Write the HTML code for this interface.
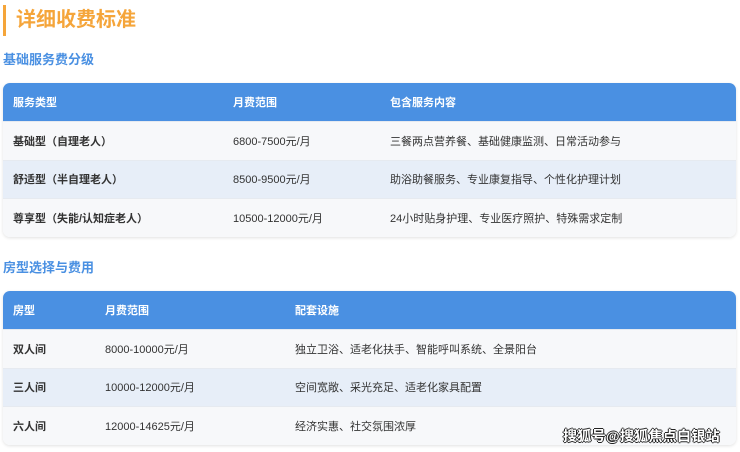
<!DOCTYPE html>
<html><head><meta charset="utf-8"><style>
*{margin:0;padding:0;box-sizing:border-box}
body{width:740px;height:452px;background:#fff;position:relative;overflow:hidden;font-family:"Liberation Sans","Noto Sans CJK SC",sans-serif;color:#333}
.bar{position:absolute;left:3px;top:5px;width:3px;height:31px;background:#f5a53a}
.title{position:absolute;left:16px;top:6px;font-size:20px;font-weight:bold;color:#f5a53a;line-height:28px}
.sub{position:absolute;left:3px;font-size:13px;font-weight:bold;color:#4a90e2;line-height:18px}
.tbl{position:absolute;left:3px;width:733px;border-radius:7px;overflow:hidden;box-shadow:0 1px 3px rgba(0,0,0,.12)}
.row{height:38.5px;display:flex;align-items:center;font-size:11px;position:relative;border-top:1px solid #e6eaf0}
.row.h{background:#4a90e2;color:#fff;font-weight:bold;border-top:none;height:38px}
.row.o{background:#f7f8fa}.row.e{background:#e7eef8}
.row span{position:absolute}
.b{font-weight:bold}
.wm{position:absolute;left:563px;top:426px;font-size:14px;font-weight:bold;color:#fff;letter-spacing:0.3px;text-shadow:1px 0 0 #222,-1px 0 0 #222,0 1px 0 #222,0 -1px 0 #222}
</style></head><body>
<div class="bar"></div><div class="title">详细收费标准</div>
<div class="sub" style="top:51px">基础服务费分级</div>
<div class="tbl" style="top:83px">
<div class="row h"><span style="left:10px">服务类型</span><span style="left:230px">月费范围</span><span style="left:387px">包含服务内容</span></div>
<div class="row o"><span class="b" style="left:10px">基础型（自理老人）</span><span style="left:230px">6800-7500元/月</span><span style="left:387px">三餐两点营养餐、基础健康监测、日常活动参与</span></div>
<div class="row e"><span class="b" style="left:10px">舒适型（半自理老人）</span><span style="left:230px">8500-9500元/月</span><span style="left:387px">助浴助餐服务、专业康复指导、个性化护理计划</span></div>
<div class="row o"><span class="b" style="left:10px">尊享型（失能/认知症老人）</span><span style="left:230px">10500-12000元/月</span><span style="left:387px">24小时贴身护理、专业医疗照护、特殊需求定制</span></div>
</div>
<div class="sub" style="top:259px">房型选择与费用</div>
<div class="tbl" style="top:291px">
<div class="row h"><span style="left:10px">房型</span><span style="left:102px">月费范围</span><span style="left:292px">配套设施</span></div>
<div class="row o"><span class="b" style="left:10px">双人间</span><span style="left:102px">8000-10000元/月</span><span style="left:292px">独立卫浴、适老化扶手、智能呼叫系统、全景阳台</span></div>
<div class="row e"><span class="b" style="left:10px">三人间</span><span style="left:102px">10000-12000元/月</span><span style="left:292px">空间宽敞、采光充足、适老化家具配置</span></div>
<div class="row o"><span class="b" style="left:10px">六人间</span><span style="left:102px">12000-14625元/月</span><span style="left:292px">经济实惠、社交氛围浓厚</span></div>
</div>
<div class="wm">搜狐号@搜狐焦点白银站</div>
</body></html>
